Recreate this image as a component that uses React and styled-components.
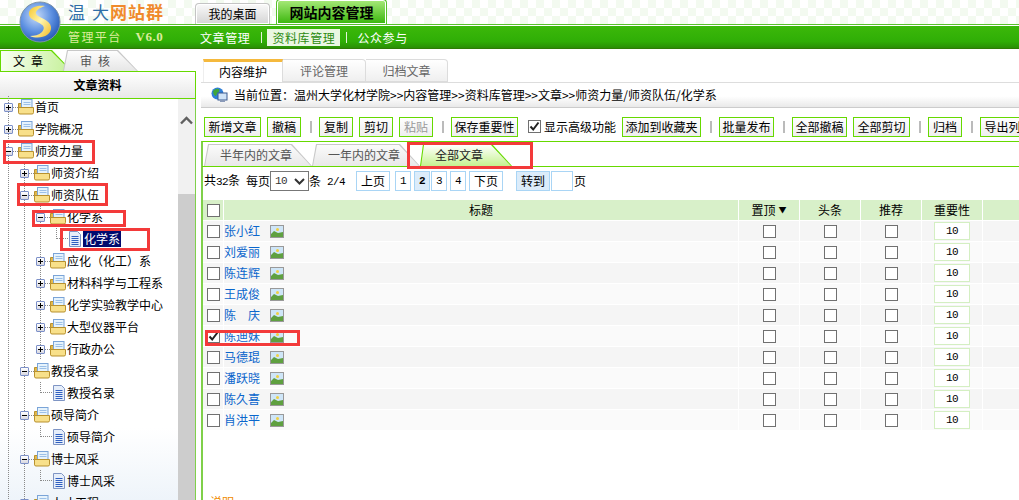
import * as React from "react"
import styled, { createGlobalStyle, css } from 'styled-components'

const green = '#66d900'
const cjk = `"Noto Sans CJK SC", "Liberation Sans", sans-serif`

const Global = createGlobalStyle`
	html, body {
		margin: 0;
		padding: 0;
		background: #fff;
		overflow: hidden;
	}
	* {
		box-sizing: border-box;
	}
`

const Page = styled.div`
	position: relative;
	width: 1019px;
	height: 500px;
	overflow: hidden;
	font-family: ${cjk};
	font-size: 12px;
	line-height: 16px;
	color: #000;
`

/* tab with one slanted side and a thin outline */
const slantedTab = (outline, fill, lean = 3, run = 20) => css`
	position: relative;
	isolation: isolate;
	background: ${outline};
	clip-path: polygon(${lean}px 0, calc(100% - ${run}px) 0, 100% 100%, 0 100%);
	&::before {
		content: "";
		position: absolute;
		inset: 1px 0 0 1px;
		z-index: -1;
		background: ${fill};
		clip-path: polygon(${lean}px 0, calc(100% - ${run + 1}px) 0, calc(100% - 1px) 100%, 0 100%);
	}
`

/* header */
const Header = styled.header`
	position: relative;
	height: 49px;
`
const HeaderTop = styled.div`
	height: 25px;
	display: flex;
	align-items: flex-end;
	padding-left: 195px;
	gap: 6px;
	background-color: #fff;
	background-image: conic-gradient(#f3faf0 25%, #fff 0 50%, #f3faf0 0 75%, #fff 0);
	background-size: 16px 16px;
	border-bottom: 1px solid #57c22a;
`
const HeaderBar = styled.div`
	height: 24px;
	display: flex;
	align-items: center;
	padding-left: 67px;
	border-top: 1px solid #fff;
	border-bottom: 1px solid #2d7c04;
	background: linear-gradient(#3cb80a, #2fae06 70%, #2a8f05);
`
const Logo = styled.svg`
	position: absolute;
	left: 19px;
	top: 1px;
`
const Brand = styled.div`
	position: absolute;
	left: 68px;
	top: 0;
	font-size: 17px;
	line-height: 24px;
	color: #2f6ea8;
	letter-spacing: 1px;
	em {
		font-style: normal;
		letter-spacing: 7px;
	}
	span {
		color: #f08a2c;
		font-weight: bold;
	}
`
const TopTab = styled.div`
	display: flex;
	align-items: center;
	justify-content: center;
	border-radius: 4px 4px 0 0;
	${p => p.$active ? `
		width: 111px;
		height: 25px;
		font-size: 14px;
		font-weight: bold;
		border: 1px solid #57c22a;
		border-bottom: none;
		box-shadow: inset 0 0 0 1px #fff;
		background: linear-gradient(#a8ea7a, #39b50b);
	` : `
		width: 75px;
		height: 21px;
		font-size: 12px;
		border: 1px solid #c4c4c4;
		border-bottom: none;
		box-shadow: inset 0 0 0 1px #fff;
		background: linear-gradient(#fafafa, #d4d4d4);
	`}
`
const Platform = styled.div`
	width: 128px;
	display: flex;
	gap: 14px;
	padding-left: 1px;
	color: #dcec9c;
	font-size: 12px;
	letter-spacing: 1.4px;
	b {
		font-family: "Liberation Serif", serif;
		font-size: 13px;
		letter-spacing: .5px;
	}
`
const MenuItem = styled.span`
	color: #fff;
	font-size: 12px;
	letter-spacing: .6px;
	padding: 0 5px;
	line-height: 17px;
	${p => p.$active && `
		background: #eaf7e2;
		color: #2c8a10;
	`}
`
const MenuSep = styled.i`
	width: 1px;
	height: 11px;
	margin: 0 5px 0 6px;
	background: #e4f3da;
`

/* layout below header */
const Body = styled.div`
	display: flex;
	height: 451px;
`

/* left side */
const Side = styled.aside`
	width: 196px;
	flex: none;
	display: flex;
	flex-direction: column;
	margin-top: 1px;
`
const SideTabs = styled.div`
	height: 22px;
	display: flex;
	align-items: flex-end;
	border-bottom: 1px solid ${green};
`
const SideTab = styled.div`
	height: 21px;
	display: flex;
	align-items: center;
	letter-spacing: 6px;
	font-size: 12px;
	${p => p.$active ? css`
		width: 72px;
		padding-left: 13px;
		${slantedTab(green, 'linear-gradient(100deg, #f8fff2, #c4f097)', 0, 20)}
	` : css`
		width: 75px;
		margin-left: -9px;
		padding-left: 17px;
		color: #555;
		${slantedTab('#c8c8c8', 'linear-gradient(#fdfdfd, #e6e6e6)', 4, 20)}
	`}
`
const SideTitle = styled.div`
	height: 27px;
	display: flex;
	align-items: center;
	justify-content: center;
	font-weight: bold;
	border-right: 1px solid ${green};
	border-bottom: 1px solid ${green};
	background: linear-gradient(#fff, #e8e8e8);
`
const SideMain = styled.div`
	flex: 1;
	display: flex;
	min-height: 0;
	border-right: 1px solid #7fd04a;
	background: linear-gradient(#fff 82%, #eef4fa);
`
const Tree = styled.ul`
	flex: 1;
	list-style: none;
	margin: -3px 0 0;
	padding: 0;
	overflow: hidden;
`
const dots = '#8a8a8a'
const TreeRow = styled.li`
	height: 22px;
	display: flex;
	align-items: center;
	padding-left: ${p => p.$level * 16 + 4}px;
	white-space: nowrap;
	background-image: ${p => p.$guides.map(() => `repeating-linear-gradient(to bottom, ${dots} 0 1px, transparent 1px 2px)`).join(', ')};
	background-size: 1px 100%;
	background-repeat: no-repeat;
	background-position: ${p => p.$guides.map(x => `${x}px 0`).join(', ')};
`
const Expander = styled.span`
	width: 9px;
	height: 9px;
	flex: none;
	position: relative;
	border: 1px solid #7c90c8;
	border-radius: 1px;
	background: linear-gradient(#fff, #d8d8e0);
	margin-right: 5px;
	&::before {
		content: "";
		position: absolute;
		left: 1px;
		top: 3px;
		width: 5px;
		height: 1px;
		background: #000;
	}
	${p => p.$open ? '' : `
		&::after {
			content: "";
			position: absolute;
			left: 3px;
			top: 1px;
			width: 1px;
			height: 5px;
			background: #000;
		}
	`}
`
const Stub = styled.i`
	width: 5px;
	height: 1px;
	flex: none;
	margin: 0 0 0 -5px;
	background: repeating-linear-gradient(to right, ${dots} 0 1px, transparent 1px 2px);
`
const NodeLabel = styled.span`
	margin-left: 1px;
	${p => p.$selected && `
		padding: 0 1px;
		margin-left: 1px;
		background: #000a6e;
		color: #fff;
	`}
`
const Connector = styled.span`
	width: 12px;
	height: 11px;
	flex: none;
	margin: -11px 0 0 4px;
	border-left: 1px dotted ${dots};
	border-bottom: 1px dotted ${dots};
`
const Scrollbar = styled.div`
	width: 17px;
	flex: none;
	display: flex;
	flex-direction: column;
	align-items: center;
	background: #f1f1f1;
`
const ScrollUp = styled.div`
	height: 95px;
	padding-top: 13px;
	color: #606060;
`
const ScrollThumb = styled.div`
	flex: 1;
	width: 100%;
	background: #cdcdcd;
`

/* right side */
const Main = styled.main`
	flex: 1;
	min-width: 0;
	padding: 10px 0 0 6px;
`
const MainTabs = styled.div`
	display: flex;
	height: 23px;
	margin-left: 1px;
`
const MainTab = styled.div`
	display: flex;
	align-items: center;
	justify-content: center;
	height: 23px;
	font-size: 12px;
	border: 1px solid #dcdcdc;
	border-left: none;
	${p => p.$active ? `
		width: 80px;
		border-top: 3px solid #f5b93d;
		border-bottom: none;
		border-left: 1px solid #eee;
		background: #fff;
		z-index: 1;
	` : `
		width: ${p.$w}px;
		color: #666;
		background: linear-gradient(#fff, #efefef);
		border-radius: 0 4px 0 0;
	`}
`
const Crumb = styled.div`
	height: 26px;
	display: flex;
	align-items: center;
	gap: 6px;
	padding-left: 10px;
	margin-left: -1px;
	border-top: 1px solid #ddd;
	border-bottom: 1px solid #ccc;
	white-space: nowrap;
	background: linear-gradient(#fff 55%, #e9e9e9);
`
const Toolbar = styled.div`
	height: 33px;
	display: flex;
	align-items: center;
	padding-left: 2px;
	padding-top: 4px;
	white-space: nowrap;
	overflow: hidden;
`
const ToolButton = styled.span`
	width: ${p => p.$w}px;
	height: 20px;
	flex: none;
	display: flex;
	align-items: center;
	justify-content: center;
	margin-right: ${p => p.$mr ?? 6}px;
	border: 1px solid ${green};
	background: linear-gradient(#fff, #eee);
	${p => p.$disabled && 'color: #999;'}
`
const ToolSep = styled.i`
	width: 2px;
	height: 12px;
	flex: none;
	margin: 0 7px 0 3px;
	background: #bbb;
`
const CheckLabel = styled.label`
	display: flex;
	align-items: center;
	gap: 3px;
	flex: none;
	margin: 0 6px 0 4px;
`
const Box = styled.span`
	width: 13px;
	height: 13px;
	flex: none;
	display: inline-flex;
	align-items: center;
	justify-content: center;
	border: 1px solid #707070;
	background: #fff;
`
const ListPanel = styled.section`
	margin-left: -1px;
	height: 400px;
	border-top: 1px solid ${green};
	border-left: 2px solid #7fd04a;
`
const SubTabs = styled.div`
	height: 25px;
	display: flex;
	align-items: flex-end;
	padding-left: 2px;
	border-bottom: 1px solid ${green};
	margin-left: -1px;
`
const SubTab = styled.div`
	height: 22px;
	display: flex;
	align-items: center;
	width: ${p => p.$w}px;
	${p => p.$active ? css`
		padding-left: 15px;
		color: #222;
		${slantedTab(green, 'linear-gradient(#fff, #c5f28f)', 3, 20)}
	` : css`
		padding-left: 16px;
		color: #555;
		${slantedTab('#c8c8c8', 'linear-gradient(#fbfbfb, #e8e8e8)', 4, 20)}
	`}
`
const Pager = styled.div`
	height: 24px;
	display: flex;
	align-items: center;
	padding: 4px 0 0;
	margin-left: 1px;
	white-space: nowrap;
`
const PagerText = styled.span`
	margin-right: ${p => p.$mr || 0}px;
`
const Num = styled.span`
	font-family: "Liberation Mono", monospace;
	font-size: 11px;
	letter-spacing: -.6px;
`
const PageSelect = styled.span`
	width: 39px;
	height: 20px;
	flex: none;
	display: flex;
	align-items: center;
	justify-content: space-between;
	padding: 0 3px 0 4px;
	border: 1px solid #777;
	color: #333;
`
const PageBtn = styled.span`
	width: ${p => p.$w ?? 34}px;
	height: 20px;
	flex: none;
	display: flex;
	align-items: center;
	justify-content: center;
	margin-right: ${p => p.$mr ?? 3}px;
	border: 1px solid #a9d5f5;
	${p => p.$hl && 'background: #dcecfa;'}
	${p => p.$current && 'font-weight: bold;'}
`
const PageInput = styled.span`
	width: 22px;
	height: 20px;
	flex: none;
	margin-right: 1px;
	border: 1px solid #a9d5f5;
`
const Table = styled.div`
	margin-top: 9px;
`
const Row = styled.div`
	display: grid;
	grid-template-columns: 20px 514px 60px 60px 60px 60px 40px;
	column-gap: 1px;
	height: 20px;
	margin-bottom: 1px;
`
const Cell = styled.div`
	display: flex;
	align-items: center;
	justify-content: ${p => p.$left ? 'flex-start' : 'center'};
	background: ${p => p.$head ? '#d8f0c9' : p.$odd ? '#f5f5f5' : '#fafafa'};
`
const TitleLink = styled.span`
	width: 36px;
	margin-right: 10px;
	color: #0a66cc;
	white-space: pre;
`
const Weight = styled.span`
	width: 36px;
	height: 18px;
	display: flex;
	align-items: center;
	justify-content: center;
	border: 1px solid #d4efc2;
	background: #fff;
	font-family: "Liberation Mono", monospace;
	font-size: 11px;
	letter-spacing: -.6px;
`
const SortArrow = styled.span`
	font-size: 8px;
	margin-left: 3px;
`
const Note = styled.div`
	margin: 64px 0 0 7px;
	color: #f08a00;
`
/* the red marks drawn on the screenshot sit over everything */
const Mark = styled.div`
	position: absolute;
	left: ${p => p.$x}px;
	top: ${p => p.$y}px;
	width: ${p => p.$w}px;
	height: ${p => p.$h}px;
	border: 3px solid #f33a3a;
	pointer-events: none;
`

const Check = () => (
	<svg width="11" height="11" viewBox="0 0 11 11">
		<path d="M1.5 5.5 L4.2 8.5 L9.5 1.5" fill="none" stroke="#222" strokeWidth="2" />
	</svg>
)

const LogoIcon = () => (
	<Logo width="42" height="42" viewBox="0 0 42 42">
		<defs>
			<radialGradient id="ball" cx="40%" cy="35%" r="70%">
				<stop offset="0" stopColor="#c8dcf8" />
				<stop offset=".55" stopColor="#5f92e2" />
				<stop offset="1" stopColor="#2458b4" />
			</radialGradient>
			<linearGradient id="swoosh" x1="0" y1="0" x2="1" y2="1">
				<stop offset="0" stopColor="#f6c62a" />
				<stop offset=".5" stopColor="#fff6b0" />
				<stop offset="1" stopColor="#f2b820" />
			</linearGradient>
		</defs>
		<circle cx="21" cy="21" r="20" fill="url(#ball)" stroke="#7d93a8" />
		<path d="M26 5 C14 3 5 11 13 18 C19 22 29 24 23 31 C20 34 15 35 11 35 C20 39 33 35 32 26 C31 18 19 17 17 13 C16 10 20 7 26 5 Z" fill="url(#swoosh)" />
	</Logo>
)

const FolderIcon = () => (
	<svg width="16" height="16" viewBox="0 0 16 16" style={{ flex: 'none' }}>
		<path d="M.5 4.5 h3 v9 h-3 Z" fill="#e3b94c" stroke="#b8912e" />
		<rect x="3.5" y=".5" width="10.5" height="10" fill="#e6f3fc" stroke="#7aa4d8" />
		<path d="M5.5 3.5h7M5.5 5.5h7" stroke="#9cc0e8" />
		<path d="M.5 8.5 h15 v5 q0 1.5 -1.5 1.5 H2 q-1.5 0 -1.5 -1.5 Z" fill="#f8e08a" stroke="#b8912e" />
	</svg>
)

const DocIcon = () => (
	<svg width="14" height="16" viewBox="0 0 14 16" style={{ flex: 'none' }}>
		<path d="M1.5 .5 H9.5 L12.5 3.5 V15.5 H1.5 Z" fill="#e6eefa" stroke="#7f95c4" />
		<path d="M3.5 5.5h7M3.5 7.5h7M3.5 9.5h7M3.5 11.5h7M3.5 13.5h7" stroke="#2f5fc0" />
	</svg>
)

const PicIcon = () => (
	<svg width="14" height="13" viewBox="0 0 14 13" style={{ flex: 'none' }}>
		<rect x=".5" y=".5" width="13" height="12" fill="#cfe6f8" stroke="#999" />
		<circle cx="7.5" cy="4.5" r="1.5" fill="#f0d040" />
		<path d="M1 12 V9 L4 6 L8 8 L13 7 V12 Z" fill="#5fa040" />
	</svg>
)

const GlobeIcon = () => (
	<svg width="17" height="17" viewBox="0 0 17 17" style={{ flex: 'none' }}>
		<circle cx="6.5" cy="6.5" r="6" fill="#2f7fd8" />
		<path d="M2 4 Q5 1 8 2 Q9 5 6 6 Q6 9 4 9 Q2 7 2 4 Z M8 8 L11 7 L11 10 L8 11 Z" fill="#3fa63a" />
		<rect x="7" y="6" width="9" height="7" fill="#cfe3f7" stroke="#3a5a90" />
		<rect x="9" y="13" width="5" height="2" fill="#8a9ab8" />
	</svg>
)

const Chevron = () => (
	<svg width="13" height="9" viewBox="0 0 13 9">
		<path d="M1 7.5 L6.5 2 L12 7.5" fill="none" stroke="#606060" strokeWidth="2.4" />
	</svg>
)

const nodes = [
	{ level: 0, label: '首页', state: 'closed', guides: [8] },
	{ level: 0, label: '学院概况', state: 'closed', guides: [8] },
	{ level: 0, label: '师资力量', state: 'open', guides: [8] },
	{ level: 1, label: '师资介绍', state: 'closed', guides: [8, 24] },
	{ level: 1, label: '师资队伍', state: 'open', guides: [8, 24] },
	{ level: 2, label: '化学系', state: 'open', guides: [8, 24, 40] },
	{ level: 3, label: '化学系', state: 'leaf', selected: true, guides: [8, 24, 40] },
	{ level: 2, label: '应化（化工）系', state: 'closed', guides: [8, 24, 40] },
	{ level: 2, label: '材料科学与工程系', state: 'closed', guides: [8, 24, 40] },
	{ level: 2, label: '化学实验教学中心', state: 'closed', guides: [8, 24, 40] },
	{ level: 2, label: '大型仪器平台', state: 'closed', guides: [8, 24, 40] },
	{ level: 2, label: '行政办公', state: 'closed', guides: [8, 24, 40] },
	{ level: 1, label: '教授名录', state: 'open', guides: [8, 24] },
	{ level: 2, label: '教授名录', state: 'leaf', guides: [8, 24] },
	{ level: 1, label: '硕导简介', state: 'open', guides: [8, 24] },
	{ level: 2, label: '硕导简介', state: 'leaf', guides: [8, 24] },
	{ level: 1, label: '博士风采', state: 'open', guides: [8, 24] },
	{ level: 2, label: '博士风采', state: 'leaf', guides: [8, 24] },
	{ level: 1, label: '人才工程', state: 'closed', guides: [8, 24] },
]

const people = ['张小红', '刘爱丽', '陈连辉', '王成俊', '陈　庆', '陈迪妹', '马德琨', '潘跃晓', '陈久喜', '肖洪平']

const marks = [
	{ x: 3, y: 140, w: 92, h: 24 },
	{ x: 17, y: 183, w: 91, h: 23 },
	{ x: 32, y: 210, w: 94, h: 17 },
	{ x: 60, y: 228, w: 90, h: 23 },
	{ x: 407, y: 142, w: 126, h: 27 },
	{ x: 205, y: 330, w: 95, h: 16 },
]

const App = () => {
	return (
		<Page>
			<Global />
			<Header>
				<HeaderTop>
					<TopTab>我的桌面</TopTab>
					<TopTab $active>网站内容管理</TopTab>
				</HeaderTop>
				<HeaderBar>
					<Platform>管理平台 <b>V6.0</b></Platform>
					<MenuItem>文章管理</MenuItem>
					<MenuSep />
					<MenuItem $active>资料库管理</MenuItem>
					<MenuSep />
					<MenuItem>公众参与</MenuItem>
				</HeaderBar>
				<LogoIcon />
				<Brand><em>温</em>大<span>网站群</span></Brand>
			</Header>
			<Body>
				<Side>
					<SideTabs>
						<SideTab $active>文章</SideTab>
						<SideTab>审核</SideTab>
					</SideTabs>
					<SideTitle>文章资料</SideTitle>
					<SideMain>
						<Tree>
							{nodes.map((n, i) => (
								<TreeRow key={i} $level={n.level} $guides={n.guides}>
									{n.state === 'leaf'
										? <><Connector /><DocIcon /></>
										: <><Expander $open={n.state === 'open'} /><Stub /><FolderIcon /></>}
									<NodeLabel $selected={n.selected}>{n.label}</NodeLabel>
								</TreeRow>
							))}
						</Tree>
						<Scrollbar>
							<ScrollUp><Chevron /></ScrollUp>
							<ScrollThumb />
						</Scrollbar>
					</SideMain>
				</Side>
				<Main>
					<MainTabs>
						<MainTab $active>内容维护</MainTab>
						<MainTab $w={83}>评论管理</MainTab>
						<MainTab $w={82}>归档文章</MainTab>
					</MainTabs>
					<Crumb>
						<GlobeIcon />
						<span>当前位置：温州大学化材学院&gt;&gt;内容管理&gt;&gt;资料库管理&gt;&gt;文章&gt;&gt;师资力量/师资队伍/化学系</span>
					</Crumb>
					<Toolbar>
						<ToolButton $w={57}>新增文章</ToolButton>
						<ToolButton $w={34}>撤稿</ToolButton>
						<ToolSep />
						<ToolButton $w={34}>复制</ToolButton>
						<ToolButton $w={34}>剪切</ToolButton>
						<ToolButton $w={34} $disabled>粘贴</ToolButton>
						<ToolSep />
						<ToolButton $w={67}>保存重要性</ToolButton>
						<CheckLabel><Box><Check /></Box>显示高级功能</CheckLabel>
						<ToolButton $w={79}>添加到收藏夹</ToolButton>
						<ToolSep />
						<ToolButton $w={55}>批量发布</ToolButton>
						<ToolSep />
						<ToolButton $w={55}>全部撤稿</ToolButton>
						<ToolButton $w={57}>全部剪切</ToolButton>
						<ToolSep />
						<ToolButton $w={34}>归档</ToolButton>
						<ToolSep />
						<ToolButton $w={57}>导出列表</ToolButton>
					</Toolbar>
					<ListPanel>
						<SubTabs>
							<SubTab $w={108}>半年内的文章</SubTab>
							<SubTab $w={108}>一年内的文章</SubTab>
							<SubTab $active $w={92}>全部文章</SubTab>
						</SubTabs>
						<Pager>
							<PagerText $mr={6}>共<Num>32</Num>条</PagerText>
							<PagerText>每页</PagerText>
							<PageSelect><Num>10</Num> <svg width="11" height="7" viewBox="0 0 11 7"><path d="M1 1 L5.5 5.5 L10 1" fill="none" stroke="#333" strokeWidth="2" /></svg></PageSelect>
							<PagerText $mr={6}>条</PagerText>
							<PagerText $mr={11}><Num>2/4</Num></PagerText>
							<PageBtn $mr={5}>上页</PageBtn>
							<PageBtn $w={16}><Num>1</Num></PageBtn>
							<PageBtn $w={16} $mr={1} $hl $current><Num>2</Num></PageBtn>
							<PageBtn $w={16}><Num>3</Num></PageBtn>
							<PageBtn $w={16}><Num>4</Num></PageBtn>
							<PageBtn $mr={13}>下页</PageBtn>
							<PageBtn $hl $mr={1}>转到</PageBtn>
							<PageInput />
							<PagerText>页</PagerText>
						</Pager>
						<Table>
							<Row>
								<Cell $head><Box /></Cell>
								<Cell $head>标题</Cell>
								<Cell $head>置顶<SortArrow>▼</SortArrow></Cell>
								<Cell $head>头条</Cell>
								<Cell $head>推荐</Cell>
								<Cell $head>重要性</Cell>
								<Cell $head />
							</Row>
							{people.map((name, i) => (
								<Row key={i}>
									<Cell $odd={i % 2 === 0}><Box>{i === 5 && <Check />}</Box></Cell>
									<Cell $left $odd={i % 2 === 0}><TitleLink>{name}</TitleLink><PicIcon /></Cell>
									<Cell $odd={i % 2 === 0}><Box /></Cell>
									<Cell $odd={i % 2 === 0}><Box /></Cell>
									<Cell $odd={i % 2 === 0}><Box /></Cell>
									<Cell $odd={i % 2 === 0}><Weight>10</Weight></Cell>
									<Cell $odd={i % 2 === 0} />
								</Row>
							))}
						</Table>
						<Note>说明</Note>
					</ListPanel>
				</Main>
			</Body>
			{marks.map((m, i) => <Mark key={i} $x={m.x} $y={m.y} $w={m.w} $h={m.h} />)}
		</Page>
	)
}

export default App
